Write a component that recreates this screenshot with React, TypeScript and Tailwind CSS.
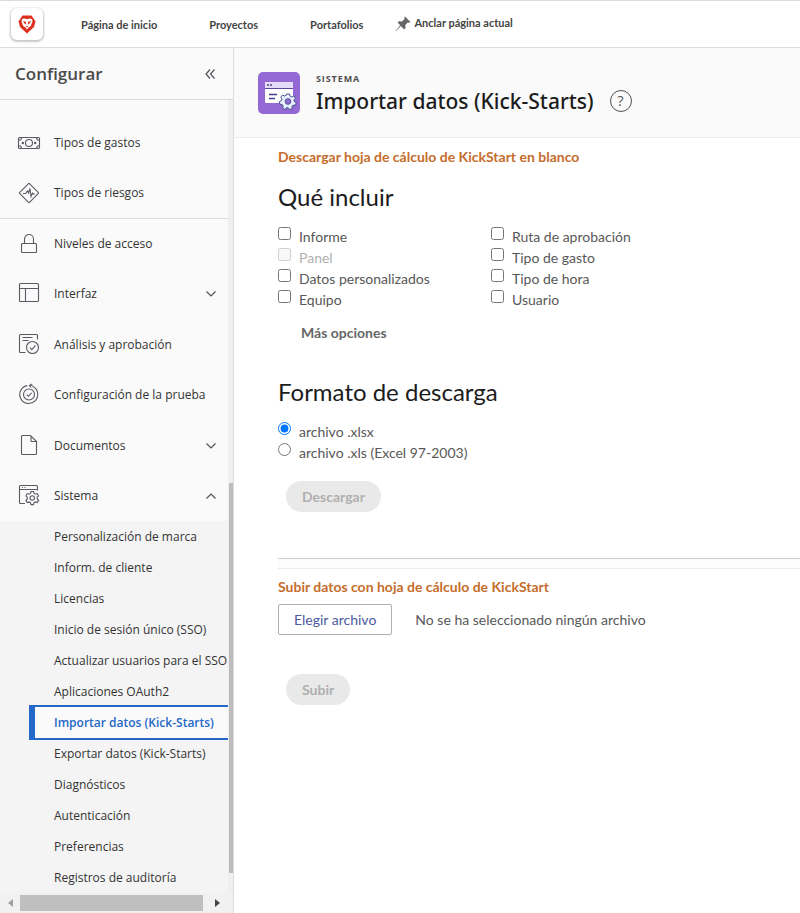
import React from "react";

type IconName = "money" | "risk" | "lock" | "layout" | "review" | "proof" | "document" | "system";

function NavIcon({ name }: { name: IconName }) {
  const shapes: Record<IconName, React.ReactNode> = {
    money: (
      <>
        <rect x="1.5" y="6.5" width="21" height="11" rx="1" />
        <circle cx="12" cy="12" r="3.5" />
        <circle cx="5.8" cy="12" r="0.7" />
        <circle cx="18.2" cy="12" r="0.7" />
        <path d="M2 9.2c1.4 0 2.4-1 2.4-2.4M22 9.2c-1.4 0-2.4-1-2.4-2.4M2 14.8c1.4 0 2.4 1 2.4 2.4M22 14.8c-1.4 0-2.4 1-2.4 2.4" />
      </>
    ),
    risk: (
      <>
        <rect x="5" y="5" width="14" height="14" rx="1" transform="rotate(45 12 12)" />
        <path d="M6 12.5h2.5l2-2.500 1 2L13 7.500l1 8 1.500-3.500.8 1H18" />
      </>
    ),
    lock: (
      <>
        <rect x="4.5" y="11.5" width="15" height="9" rx="1" />
        <path d="M7.5 11.5V7a4.5 4.5 0 0 1 9 0v4.5" />
      </>
    ),
    layout: (
      <>
        <rect x="2.5" y="1.5" width="19" height="18" rx="1" />
        <path d="M2.5 6.5h19M8.5 6.5v13" />
      </>
    ),
    review: (
      <>
        <path d="M8.5 19.5h-5a1 1 0 0 1-1-1v-16a1 1 0 0 1 1-1h16a1 1 0 0 1 1 1v4M5.5 4.5h10M5.5 7.5h6" />
        <circle cx="15.5" cy="14.5" r="6" />
        <path d="M12.800 14.700l2 2 3.600-4" />
      </>
    ),
    proof: (
      <>
        <path d="M15.500 3.300a9 9 0 1 1-5.200-.7M12.800 2.400l3-.2M14.500 1l-2 1.500 1.600 2" />
        <circle cx="12" cy="11.5" r="5.5" />
        <path d="M9.700 11.600l1.700 1.700 3.200-3.500" />
      </>
    ),
    document: <path d="M13.500 1.500h-8a1 1 0 0 0-1 1v17a1 1 0 0 0 1 1h13a1 1 0 0 0 1-1v-12zM14 1.800v5a.7.7 0 0 0 .7.7h4.600" />,
    system: (
      <>
        <path d="M8 19.500H3.500a1 1 0 0 1-1-1v-16a1 1 0 0 1 1-1h16a1 1 0 0 1 1 1v4M2.500 5.500h18M5 3.500h1M7.500 3.500h1" />
        <path d="M14 7.500h2.500l.5 1.900 1.500.8 1.800-.6 1.300 2.200-1.400 1.400v1.700l1.400 1.400-1.300 2.200-1.800-.6-1.500.8-.5 1.900H14l-.5-1.900-1.500-.8-1.800.6-1.300-2.200 1.400-1.400v-1.700l-1.400-1.400 1.300-2.200 1.800.6 1.500-.8z" />
        <circle cx="15.250" cy="14" r="2.200" />
      </>
    ),
  };
  return (
    <svg className="size-6 shrink-0" viewBox="0 0 24 24" fill="none" stroke="#5a5a62" strokeWidth="1.1" aria-hidden="true">
      {shapes[name]}
    </svg>
  );
}

function Chevron({ up }: { up?: boolean }) {
  return (
    <svg className="h-2 w-3 shrink-0" viewBox="0 0 12 8" fill="none" stroke="#505058" strokeWidth="1.2" aria-hidden="true">
      <path d={up ? "M1.500 6.500L6 2l4.500 4.500" : "M1.500 1.500L6 6l4.500-4.500"} />
    </svg>
  );
}

function NavRow({ icon, label, open }: { icon: IconName; label: string; open?: boolean }) {
  const cls = "flex w-full items-center pr-[11px] pl-[17px] text-left whitespace-nowrap";
  const inner = (
    <>
      <NavIcon name={icon} />
      <span className="ml-[13px] flex-1">{label}</span>
      {open !== undefined && <Chevron up={open} />}
    </>
  );
  return (
    <li className="flex h-[50px]">
      {open === undefined ? (
        <a href="#" className={cls}>{inner}</a>
      ) : (
        <button type="button" aria-expanded={open} className={cls}>{inner}</button>
      )}
    </li>
  );
}

const systemPages = [
  "Personalización de marca",
  "Inform. de cliente",
  "Licencias",
  "Inicio de sesión único (SSO)",
  "Actualizar usuarios para el SSO",
  "Aplicaciones OAuth2",
  "Importar datos (Kick-Starts)",
  "Exportar datos (Kick-Starts)",
  "Diagnósticos",
  "Autenticación",
  "Preferencias",
  "Registros de auditoría",
];

const includeColumns = [
  ["Informe", "Panel", "Datos personalizados", "Equipo"],
  ["Ruta de aprobación", "Tipo de gasto", "Tipo de hora", "Usuario"],
];

function TopBar() {
  return (
    <header className="flex h-12 items-center border-t border-b border-[#dcdcdc] bg-white font-[Lato,'Noto_Sans',sans-serif] text-[11px] font-bold text-[#444]">
      <a href="#" aria-label="Inicio" className="ml-[11px] flex size-8 items-center justify-center rounded-md bg-white shadow-[0_1px_2px_1px_rgba(0,0,0,0.22)]">
        <svg className="size-5" viewBox="0 0 20 20" aria-hidden="true">
          <path d="M5.500 1.500h9l4 6-1.500 5.500-7 6.500-7-6.500L1.500 7.500z" fill="#dc2f1e" />
          <path d="M5 5l2.500-.5 2.500.8 2.500-.8L15 5l.5 2.500-1.700 4.500-2.300 1.500L10 15.500 8.500 13.500 6.200 12 4.500 7.500z" fill="#fff" />
          <path d="M6 7l2.800.7.400 3L7.500 9.500zM14 7l-2.800.7-.4 3 1.700-1.200zM8.800 12h2.400L10 13.500z" fill="#dc2f1e" />
        </svg>
      </a>
      <nav className="flex items-center gap-[52px] pt-[2px] pl-[38px]">
        <a href="#">Página de inicio</a>
        <a href="#">Proyectos</a>
        <a href="#">Portafolios</a>
      </nav>
      <button type="button" className="ml-8 flex items-center gap-[3px] pb-px">
        <svg className="size-4" viewBox="0 0 16 16" fill="#666" aria-hidden="true">
          <path d="M10 .5l5.500 5.500-1.500.8-1.200-.4-2.600 2.600.4 3-1.400 1.400L5.800 10 .8 15.200.5 15l4.700-5.700L2.600 6.600 4 5.300l3 .3 2.600-2.600-.4-1.300z" />
        </svg>
        Anclar página actual
      </button>
    </header>
  );
}

function Sidebar() {
  return (
    <aside className="flex w-[234px] shrink-0 flex-col border-r border-[#dcdcdc] bg-[#fafafa] text-[12px] text-[#333]">
      <div className="flex h-[52px] items-center justify-between border-b border-[#dcdcdc] pr-[18px] pl-[15px]">
        <h2 className="text-[17px] font-semibold text-[#4b4b4b]">Configurar</h2>
        <button type="button" aria-label="Contraer">
          <svg className="size-[10px]" viewBox="0 0 10 10" fill="none" stroke="#505058" strokeWidth="1.2" aria-hidden="true">
            <path d="M5 .5L1 5l4 4.500M9.500.5L5.500 5l4 4.500" />
          </svg>
        </button>
      </div>
      <div className="flex flex-1">
        <nav className="min-w-0 flex-1">
          <ul className="border-b border-[#dcdcdc] pt-[18px]">
            <NavRow icon="money" label="Tipos de gastos" />
            <NavRow icon="risk" label="Tipos de riesgos" />
          </ul>
          <ul className="flex h-[302px] flex-col justify-between">
            <NavRow icon="lock" label="Niveles de acceso" />
            <NavRow icon="layout" label="Interfaz" open={false} />
            <NavRow icon="review" label="Análisis y aprobación" />
            <NavRow icon="proof" label="Configuración de la prueba" />
            <NavRow icon="document" label="Documentos" open={false} />
            <NavRow icon="system" label="Sistema" open />
          </ul>
          <ul className="bg-[#f4f4f4]">
            {systemPages.map((page) => {
              const current = page === "Importar datos (Kick-Starts)";
              return (
                <li key={page} className="flex h-[31px] items-center pl-[29px]">
                  <a
                    href="#"
                    aria-current={current ? "page" : undefined}
                    className={
                      current
                        ? "flex h-[35px] w-full shrink-0 items-center border-y-2 border-l-6 border-[#2468c8] bg-[#fafafa] pl-[19px] font-semibold whitespace-nowrap text-[#2468c8]"
                        : "pl-[25px] whitespace-nowrap"
                    }
                  >
                    {page}
                  </a>
                </li>
              );
            })}
          </ul>
        </nav>
        <div className="flex w-[5px] shrink-0 flex-col justify-end bg-[#efefef] pb-5">
          <div className="ml-px h-[390px] bg-[#bdbdbd]" />
        </div>
      </div>
      <div className="flex h-5 shrink-0 items-center justify-between bg-[#f1f1f1] pr-[13px] pl-2">
        <svg className="h-2 w-[5px]" viewBox="0 0 5 8" fill="#a0a0a0" aria-hidden="true"><path d="M5 0v8L0 4z" /></svg>
        <div className="mx-[7px] h-4 flex-1 bg-[#bfbfbf]" />
        <svg className="ml-[5px] h-2 w-[5px]" viewBox="0 0 5 8" fill="#444" aria-hidden="true"><path d="M0 0v8l5-4z" /></svg>
      </div>
    </aside>
  );
}

function Choice({ type, label, checked, disabled }: { type: "checkbox" | "radio"; label: string; checked?: boolean; disabled?: boolean }) {
  return (
    <label className={disabled ? "flex h-[21px] items-start text-[#b0b0b0]" : "flex h-[21px] items-start"}>
      <input type={type} name={type === "radio" ? "formato" : label} defaultChecked={checked} disabled={disabled} className="size-[13px]" />
      <span className="ml-2 leading-5">{label}</span>
    </label>
  );
}

function PageHeader() {
  return (
    <div className="flex h-[90px] items-center border-b border-[#ececec] bg-[#fafafa] pl-6">
      <svg className="size-[42px] shrink-0" viewBox="0 0 42 42" aria-hidden="true">
        <rect width="42" height="42" rx="5" fill="#9469d6" />
        <path d="M7 10h28v6H7z" fill="#e7dcf7" />
        <path d="M7 17h28v14H8a1 1 0 0 1-1-1z" fill="#fff" />
        <path d="M7 16.500h28" stroke="#5b4a9c" />
        <path d="M9 13h2M12 13h2M11 22.500h8M11 26.500h6" stroke="#45408a" strokeWidth="1.600" />
        <path d="M28.500 22h3l.6 2.200 1.600.8 2.100-1 1.700 2.200-1.500 1.700.3 1.700 2 1-.8 2.700-2.300-.2-1.200 1.300.3 2.200-2.700.9-1.500-1.800-1.700.1-1.400 1.700-2.400-1.300.5-2.200-1-1.500-2.200-.2-.5-2.700 2.100-1 .5-1.700-1.300-1.800 1.900-2 2 .9 1.500-.8z" fill="#e8eefb" stroke="#45508f" />
        <circle cx="30" cy="29.500" r="2.800" fill="#9469d6" stroke="#45508f" />
      </svg>
      <div className="ml-4">
        <p className="text-[9px] leading-4 font-bold tracking-widest text-[#505050]">SISTEMA</p>
        <div className="flex items-center">
          <h1 className="font-['Noto_Sans',sans-serif] text-[21px] leading-7 font-medium text-[#1c1c1c]">Importar datos (Kick-Starts)</h1>
          <button type="button" aria-label="Ayuda" className="ml-4 flex size-[22px] items-center justify-center rounded-full border border-[#505058] text-[14px] text-[#505058]">?</button>
        </div>
      </div>
    </div>
  );
}

const linkStyle = "font-bold text-[#c56d2c]";
const headingStyle = "text-[24px] leading-7 text-[#1c1c1c]";
const pillStyle = "ml-2 flex h-[31px] items-center rounded-full bg-[#e9e9e9] px-4 font-bold text-[#b0b0b0]";

export default function App() {
  return (
    <div className="flex min-h-screen flex-col border-b border-[#a8a8a8] bg-white font-['Open_Sans','Noto_Sans',sans-serif]">
      <TopBar />
      <div className="flex flex-1">
        <Sidebar />
        <main className="min-w-0 flex-1">
          <PageHeader />
          <div className="pl-11 font-[Lato,'Noto_Sans',sans-serif] text-[14px] leading-5 text-[#585858]">
            <a href="#" className={`mt-[9px] block ${linkStyle}`}>Descargar hoja de cálculo de KickStart en blanco</a>
            <h2 className={`mt-4 ${headingStyle}`}>Qué incluir</h2>
            <div className="mt-4 flex">
              {includeColumns.map((column) => (
                <div key={column[0]} className="w-[213px]">
                  {column.map((label) => (
                    <Choice key={label} type="checkbox" label={label} disabled={label === "Panel"} />
                  ))}
                </div>
              ))}
            </div>
            <button type="button" className="mt-3 ml-[23px] block font-bold text-[#666]">Más opciones</button>
            <h2 className={`mt-[35px] ${headingStyle}`}>Formato de descarga</h2>
            <div className="mt-4">
              <Choice type="radio" label="archivo .xlsx" checked />
              <Choice type="radio" label="archivo .xls (Excel 97-2003)" />
            </div>
            <button type="button" disabled className={`mt-[17px] ${pillStyle}`}>Descargar</button>
            <hr className="mt-[46px] h-[11px] border-t border-b border-t-[#d0d0d0] border-b-[#ececec] bg-[#fcfcfc]" />
            <h3 className={`mt-2 ${linkStyle}`}>Subir datos con hoja de cálculo de KickStart</h3>
            <div className="mt-[7px] flex items-center">
              <label className="flex h-[31px] items-center rounded-xs border border-[#b0b0b0] px-[15px] text-[#4a5aa0]">
                Elegir archivo
                <input type="file" className="sr-only" />
              </label>
              <span className="ml-[23px]">No se ha seleccionado ningún archivo</span>
            </div>
            <button type="button" disabled className={`mt-[39px] ${pillStyle}`}>Subir</button>
          </div>
        </main>
      </div>
    </div>
  );
}
